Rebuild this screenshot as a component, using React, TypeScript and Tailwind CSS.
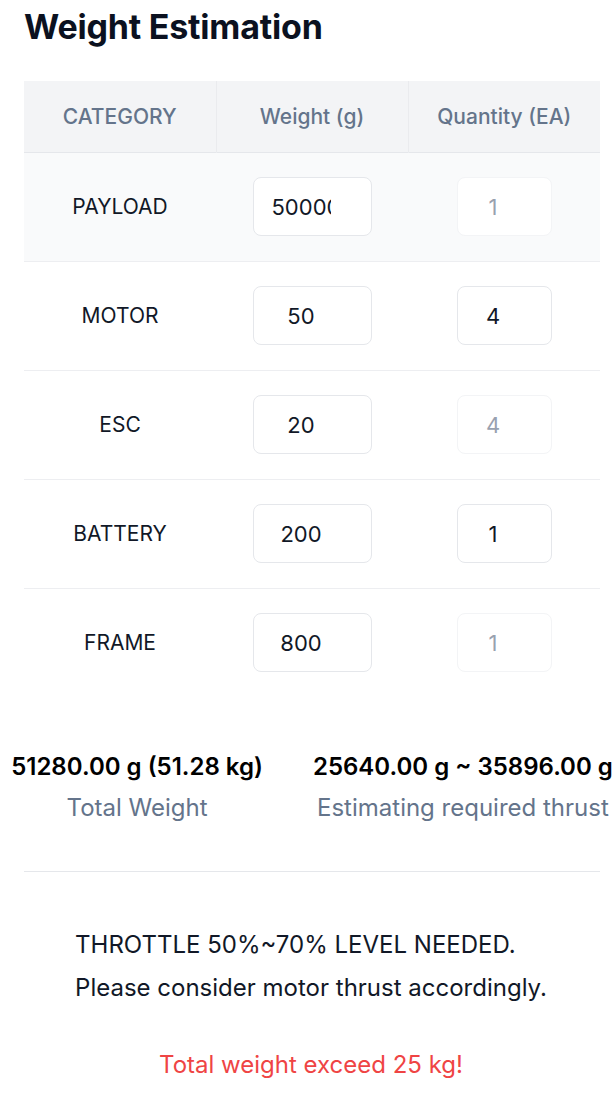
import React from 'react';

type Row = {
  category: string;
  weight: string;
  quantity: string;
  fixedQty: boolean;
};

const rows: Row[] = [
  { category: 'PAYLOAD', weight: '50000', quantity: '1', fixedQty: true },
  { category: 'MOTOR', weight: '50', quantity: '4', fixedQty: false },
  { category: 'ESC', weight: '20', quantity: '4', fixedQty: true },
  { category: 'BATTERY', weight: '200', quantity: '1', fixedQty: false },
  { category: 'FRAME', weight: '800', quantity: '1', fixedQty: true },
];

function App() {
  return (
    <div className="w-[616px] bg-white font-['Inter','Noto_Sans',sans-serif] text-slate-900">
      <h1 className="px-6 pt-[6px] text-[34px] leading-[42px] font-bold tracking-[-0.2px] text-[#0b1120]">
        Weight Estimation
      </h1>

      <table className="ml-6 mt-[33px] w-[576px] table-fixed border-collapse text-[21px]">
        <thead>
          <tr className="h-[71px] border-b border-gray-200 bg-gray-100 font-medium text-[#64748b]">
            <th className="font-medium">CATEGORY</th>
            <th className="border-l border-gray-200/70 font-medium">Weight (g)</th>
            <th className="border-l border-gray-200/70 font-medium">Quantity (EA)</th>
          </tr>
        </thead>
        <tbody>
          {rows.map((r, i) => (
            <tr
              key={r.category}
              className={
                (i === 0 ? 'bg-[#f9fafb] ' : 'bg-white ') +
                (i < rows.length - 1 ? 'h-[109px] border-b border-gray-200/70' : 'h-[109px]')
              }
            >
              <td className="text-center text-[#111827]">{r.category}</td>
              <td>
                <div className="flex justify-center">
                  <input
                    readOnly
                    value={r.weight}
                    className="h-[59px] w-[119px] rounded-lg border border-gray-200 bg-white pl-[18px] pr-[40px] text-center text-[22px] text-[#111827] outline-none"
                  />
                </div>
              </td>
              <td>
                <div className="flex justify-center">
                  <input
                    readOnly
                    disabled={r.fixedQty}
                    value={r.quantity}
                    className={
                      'h-[59px] w-[95px] rounded-lg border bg-white pl-[18px] pr-[40px] text-center text-[22px] outline-none ' +
                      (r.fixedQty ? 'border-gray-100 text-gray-400' : 'border-gray-200 text-[#111827]')
                    }
                  />
                </div>
              </td>
            </tr>
          ))}
        </tbody>
      </table>

      <div className="ml-6 mt-[54px] flex w-[576px] justify-center gap-[50px] text-2xl">
        <div className="flex shrink-0 flex-col items-center">
          <div className="whitespace-nowrap font-semibold leading-8 text-black">51280.00 g (51.28 kg)</div>
          <div className="mt-[9px] whitespace-nowrap leading-8 text-[#64748b]">Total Weight</div>
        </div>
        <div className="flex shrink-0 flex-col items-center">
          <div className="whitespace-nowrap font-semibold leading-8 text-black">25640.00 g ~ 35896.00 g</div>
          <div className="mt-[9px] whitespace-nowrap leading-8 text-[#64748b]">Estimating required thrust</div>
        </div>
      </div>

      <div className="ml-6 mt-[47px] w-[576px] border-t border-gray-200"></div>

      <div className="mt-[57px] flex justify-center pl-[6px] text-2xl text-[#111827]">
        <div className="flex flex-col gap-[11px]">
          <p className="leading-8">THROTTLE 50%~70% LEVEL NEEDED.</p>
          <p className="leading-8">Please consider motor thrust accordingly.</p>
        </div>
      </div>

      <p className="mt-[45px] pb-6 pl-[6px] text-center text-2xl leading-8 text-[#ef4444]">Total weight exceed 25 kg!</p>
    </div>
  );
}

export default App;
